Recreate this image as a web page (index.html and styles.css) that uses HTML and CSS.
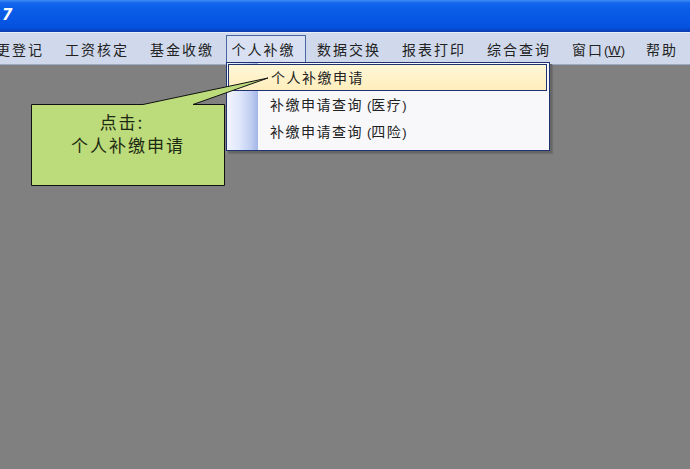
FILE: index.html
```html
<!DOCTYPE html>
<html lang="zh-CN">
<head>
<meta charset="utf-8">
<title>个人补缴</title>
<link rel="stylesheet" href="styles.css">
</head>
<body>
<div class="app">
  <div class="titlebar"><span class="title">7</span></div>
  <div class="menubar">
    <span class="mi first">更登记</span>
    <span class="mi">工资核定</span>
    <span class="mi">基金收缴</span>
    <span class="mi active">个人补缴</span>
    <span class="mi">数据交换</span>
    <span class="mi">报表打印</span>
    <span class="mi">综合查询</span>
    <span class="mi">窗口<span class="paren">(<u>W</u>)</span></span>
    <span class="mi">帮助</span>
  </div>
  <div class="workspace"></div>

  <div class="dropdown">
    <div class="strip"></div>
    <div class="items">
      <div class="item hot">个人补缴申请</div>
      <div class="item">补缴申请查询<span class="paren lp">(</span>医疗<span class="paren">)</span></div>
      <div class="item">补缴申请查询<span class="paren lp">(</span>四险<span class="paren">)</span></div>
    </div>
  </div>

  <svg class="callout-shape" width="690" height="469" viewBox="0 0 690 469">
    <path d="M31.5,104.5 L143,104.5 L268,78 L193,104.5 L224.5,104.5 L224.5,185.5 L31.5,185.5 Z" fill="#bcdb7a" stroke="#111" stroke-width="1"/>
  </svg>
  <div class="callout-text">
    <div class="l1">点击:</div>
    <div class="l2">个人补缴申请</div>
  </div>
</div>
</body>
</html>
```
FILE: styles.css
```css
html, body {
  margin: 0;
  padding: 0;
}
body {
  width: 690px;
  height: 469px;
  overflow: hidden;
  background: #808080;
  font-family: "Noto Sans CJK SC", "Noto Sans", sans-serif;
}
.app {
  position: relative;
  width: 690px;
  height: 469px;
  display: flex;
  flex-direction: column;
}
.titlebar {
  height: 32px;
  background: linear-gradient(to bottom, #3d8cf4 0px, #1466ec 3px, #0a5ee8 8px, #0757e4 20px, #0450dc 28px, #0a3fb8 31px, #0a3fb8 32px);
  display: flex;
  align-items: center;
}
.title {
  font-family: "DejaVu Sans", sans-serif;
  font-weight: bold;
  font-style: italic;
  color: #fff;
  font-size: 15px;
  margin-left: 2px;
  margin-top: -2px;
}
.menubar {
  height: 31px;
  background: #d0d9ec;
  border-top: 1px solid #e6ecf8;
  border-bottom: 1px solid #9aa8c4;
  display: flex;
  align-items: center;
  white-space: nowrap;
  overflow: hidden;
}
.mi {
  font-size: 14px;
  letter-spacing: 2px;
  color: #222;
  padding: 0 10.5px;
  height: 28px;
  line-height: 28px;
  box-sizing: border-box;
  flex: none;
}
.mi.first {
  margin-left: -14.5px;
}
.mi.active {
  border: 1px solid #4a66a0;
  background: #d8e0f2;
  line-height: 26px;
  padding: 0 9px 0 5px;
  margin-left: 1px;
  margin-right: 1px;
}
.paren {
  font-family: "Liberation Sans", sans-serif;
  letter-spacing: 0;
  font-size: 13px;
}
.paren.lp {
  margin-left: 4px;
}
.workspace {
  flex: 1;
  background: #808080;
}
.dropdown {
  position: absolute;
  left: 226px;
  top: 62px;
  width: 322px;
  height: 87px;
  border: 1px solid #1d3270;
  background: #f8f8fb;
  box-shadow: 2px 2px 0 #666, 3px 3px 1px #707070;
  display: flex;
}
.strip {
  position: absolute;
  left: 0;
  top: 0;
  bottom: 0;
  width: 31px;
  background: linear-gradient(to right, #f2f5fe 0%, #dfe7fa 40%, #c2d0f2 75%, #a2b6e6 100%);
}
.items {
  position: relative;
  flex: 1;
  padding: 1px 1px 0 1px;
  display: flex;
  flex-direction: column;
}
.item {
  height: 27px;
  line-height: 27px;
  font-size: 14px;
  letter-spacing: 1.5px;
  color: #222;
  padding-left: 42px;
  box-sizing: border-box;
}
.item.hot {
  background: linear-gradient(to bottom, #fff7d8, #ffeebc);
  border: 1px solid #1d3270;
  line-height: 25px;
  padding-left: 42px;
  margin-right: 1px;
}
.callout-shape {
  position: absolute;
  left: 0;
  top: 0;
  pointer-events: none;
}
.callout-text {
  position: absolute;
  left: 32px;
  top: 105px;
  width: 192px;
  height: 80px;
  display: flex;
  flex-direction: column;
  align-items: center;
  padding-top: 5px;
  box-sizing: border-box;
  color: #1c2a12;
  font-size: 17px;
  letter-spacing: 2px;
  line-height: 23px;
}
.callout-text .l1 {
  margin-left: -12px;
}
```
